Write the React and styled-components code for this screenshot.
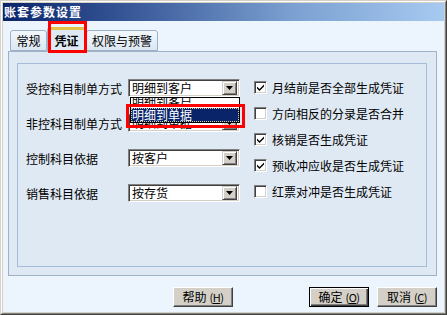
import React from 'react';
import styled, { createGlobalStyle } from 'styled-components';

const Global = createGlobalStyle`
  html, body { margin: 0; padding: 0; background: #ffffff; }
  body {
    font-family: "Noto Sans CJK SC", "Liberation Sans", sans-serif;
    font-size: 12px;
    color: #000;
  }
  * { box-sizing: border-box; }
`;

const Window = styled.div`
  width: 447px;
  height: 315px;
  border: 1px solid;
  border-color: #d4d0c8 #404040 #404040 #d4d0c8;
  background: #d4d0c8;
`;

const Frame = styled.div`
  height: 100%;
  border: 1px solid;
  border-color: #ffffff #808080 #808080 #ffffff;
  padding: 1px;
  display: flex;
  flex-direction: column;
`;

const TitleBar = styled.div`
  height: 18px;
  flex: none;
  background: linear-gradient(to right, #0a246a 0%, #3a5a9a 30%, #7b9fd0 65%, #a6caf0 100%);
  color: #ffffff;
  font-weight: bold;
  font-size: 12px;
  letter-spacing: 1px;
  line-height: 18px;
  padding-left: 1px;
  white-space: nowrap;
`;

const Body = styled.div`
  flex: 1;
  background: #ecf5fe;
  display: flex;
  flex-direction: column;
  padding: 0 7px 0 5px;
`;

const TabRow = styled.div`
  height: 30px;
  display: flex;
  align-items: flex-end;
  padding-left: 2px;
  position: relative;
  z-index: 2;
`;

const Tab = styled.div`
  position: relative;
  height: ${p => (p.$active ? '25px' : '21px')};
  width: ${p => p.$w}px;
  margin-bottom: ${p => (p.$active ? '-1px' : '0')};
  border: 1px solid #9fb1c6;
  border-bottom: ${p => (p.$active ? 'none' : '1px solid #9fb1c6')};
  border-top: ${p => (p.$active ? '3px solid #e3c24a' : '1px solid #9fb1c6')};
  border-radius: 3px 3px 0 0;
  background: ${p => (p.$active ? '#dfe9f3' : 'linear-gradient(#f2f7fc, #dce7f1)')};
  display: flex;
  align-items: center;
  justify-content: center;
  font-weight: ${p => (p.$active ? 'bold' : 'normal')};
  font-size: 12px;
  padding-bottom: ${p => (p.$active ? '2px' : '0')};
  white-space: nowrap;
`;

const Highlight = styled.div`
  position: absolute;
  left: ${p => p.$l}px;
  top: ${p => p.$t}px;
  width: ${p => p.$w}px;
  height: ${p => p.$h}px;
  border: 3px solid #ff0000;
  pointer-events: none;
  z-index: 10;
`;

const Panel = styled.div`
  height: 225px;
  border: 1px solid #9fb1c6;
  background: #dfe9f3;
  padding: 11px 9px 8px 8px;
  display: flex;
`;

const Group = styled.div`
  flex: 1;
  border: 1px solid #a5bddb;
  padding: 15px 0 0 8px;
  display: flex;
`;

const LeftCol = styled.div`
  width: 228px;
  display: flex;
  flex-direction: column;
  gap: 17px;
`;

const FieldRow = styled.div`
  display: flex;
  align-items: center;
  height: 18px;
`;

const FieldLabel = styled.div`
  width: 102px;
  white-space: nowrap;
`;

const Combo = styled.div`
  position: relative;
  width: 112px;
  height: 18px;
  background: #ffffff;
  border: 1px solid;
  border-color: #808080 #ffffff #ffffff #808080;
  box-shadow: inset 1px 1px 0 #404040, inset -1px -1px 0 #d4d0c8;
  display: flex;
  align-items: center;
  padding: 0 2px 0 3px;
`;

const ComboText = styled.div`
  flex: 1;
  line-height: 14px;
  white-space: nowrap;
`;

const ComboButton = styled.div`
  width: 15px;
  height: 14px;
  background: #d4d0c8;
  border: 1px solid;
  border-color: #d4d0c8 #404040 #404040 #d4d0c8;
  box-shadow: inset 1px 1px 0 #ffffff, inset -1px -1px 0 #808080;
  display: flex;
  align-items: center;
  justify-content: center;
`;

const DropList = styled.div`
  position: absolute;
  left: 1px;
  top: 17px;
  width: 110px;
  height: 26px;
  background: #ffffff;
  border: 1px solid #000000;
  overflow: hidden;
  z-index: 5;
`;

const ListItem = styled.div`
  height: 14px;
  line-height: 14px;
  padding-left: 1px;
  white-space: nowrap;
  margin-top: ${p => p.$mt || 0}px;
  background: ${p => (p.$sel ? '#0a246a' : 'transparent')};
  color: ${p => (p.$sel ? '#ffffff' : '#000000')};
  outline: ${p => (p.$sel ? '1px dotted #d8d0a0' : 'none')};
  outline-offset: -1px;
`;

const RightCol = styled.div`
  display: flex;
  flex-direction: column;
  gap: 10px;
`;

const CheckRow = styled.div`
  display: flex;
  align-items: center;
  height: 16px;
  gap: 5px;
  white-space: nowrap;
`;

const CheckBox = styled.div`
  width: 13px;
  height: 13px;
  background: #ffffff;
  border: 1px solid;
  border-color: #808080 #ffffff #ffffff #808080;
  box-shadow: inset 1px 1px 0 #404040, inset -1px -1px 0 #d4d0c8;
  display: flex;
  align-items: center;
  justify-content: center;
`;

const Footer = styled.div`
  display: flex;
  padding: 11px 0 0 165px;
  gap: 8px;
`;

const Spacer = styled.div`
  flex: 1;
`;

const Button = styled.div`
  width: 60px;
  height: 20px;
  background: #d4d0c8;
  border: 1px solid;
  border-color: ${p => (p.$def ? '#000000' : '#ffffff #404040 #404040 #ffffff')};
  box-shadow: ${p =>
    p.$def
      ? 'inset 1px 1px 0 #ffffff, inset -1px -1px 0 #404040, inset -2px -2px 0 #808080'
      : 'inset -1px -1px 0 #808080'};
  display: flex;
  align-items: center;
  justify-content: center;
  font-size: 12px;
  white-space: nowrap;
  line-height: 1;
`;

const Key = styled.span`
  font-size: 11px;
  margin-left: 3px;
  letter-spacing: -0.5px;
  u { text-decoration: underline; }
`;

const Arrow = () => (
  <svg width="7" height="4" viewBox="0 0 7 4">
    <path d="M0 0H7L3.5 4Z" fill="#000" />
  </svg>
);

const Tick = () => (
  <svg width="9" height="9" viewBox="0 0 9 9">
    <path d="M1 3.5L3.5 6L8 1.5V3.5L3.5 8L1 5.5Z" fill="#000" />
  </svg>
);

const ComboBox = ({ value, children }) => (
  <Combo>
    <ComboText>{value}</ComboText>
    <ComboButton>
      <Arrow />
    </ComboButton>
    {children}
  </Combo>
);

const fields = [
  { label: '受控科目制单方式', value: '明细到客户', open: true },
  { label: '非控科目制单方式', value: '明细到单据' },
  { label: '控制科目依据', value: '按客户' },
  { label: '销售科目依据', value: '按存货' },
];

const checks = [
  { label: '月结前是否全部生成凭证', on: true },
  { label: '方向相反的分录是否合并', on: false },
  { label: '核销是否生成凭证', on: true },
  { label: '预收冲应收是否生成凭证', on: true },
  { label: '红票对冲是否生成凭证', on: false },
];

export default function App() {
  return (
    <>
      <Global />
      <Window>
        <Frame>
          <TitleBar>账套参数设置</TitleBar>
          <Body>
            <TabRow>
              <Tab $w={37}>常规</Tab>
              <Tab $w={39} $active>
                凭证
                <Highlight $l={0} $t={-9} $w={39} $h={32} />
              </Tab>
              <Tab $w={72}>权限与预警</Tab>
            </TabRow>
            <Panel>
              <Group>
                <LeftCol>
                  {fields.map(f => (
                    <FieldRow key={f.label}>
                      <FieldLabel>{f.label}</FieldLabel>
                      <ComboBox value={f.value}>
                        {f.open && (
                          <>
                            <DropList>
                              <ListItem $mt={-4}>明细到客户</ListItem>
                              <ListItem $sel>明细到单据</ListItem>
                            </DropList>
                            <Highlight $l={-3} $t={24} $w={119} $h={24} />
                          </>
                        )}
                      </ComboBox>
                    </FieldRow>
                  ))}
                </LeftCol>
                <RightCol>
                  {checks.map(c => (
                    <CheckRow key={c.label}>
                      <CheckBox>{c.on && <Tick />}</CheckBox>
                      <span>{c.label}</span>
                    </CheckRow>
                  ))}
                </RightCol>
              </Group>
            </Panel>
            <Footer>
              <Button>
                帮助<Key>(<u>H</u>)</Key>
              </Button>
              <Spacer />
              <Button $def>
                确定<Key>(<u>O</u>)</Key>
              </Button>
              <Button>
                取消<Key>(<u>C</u>)</Key>
              </Button>
            </Footer>
          </Body>
        </Frame>
      </Window>
    </>
  );
}
